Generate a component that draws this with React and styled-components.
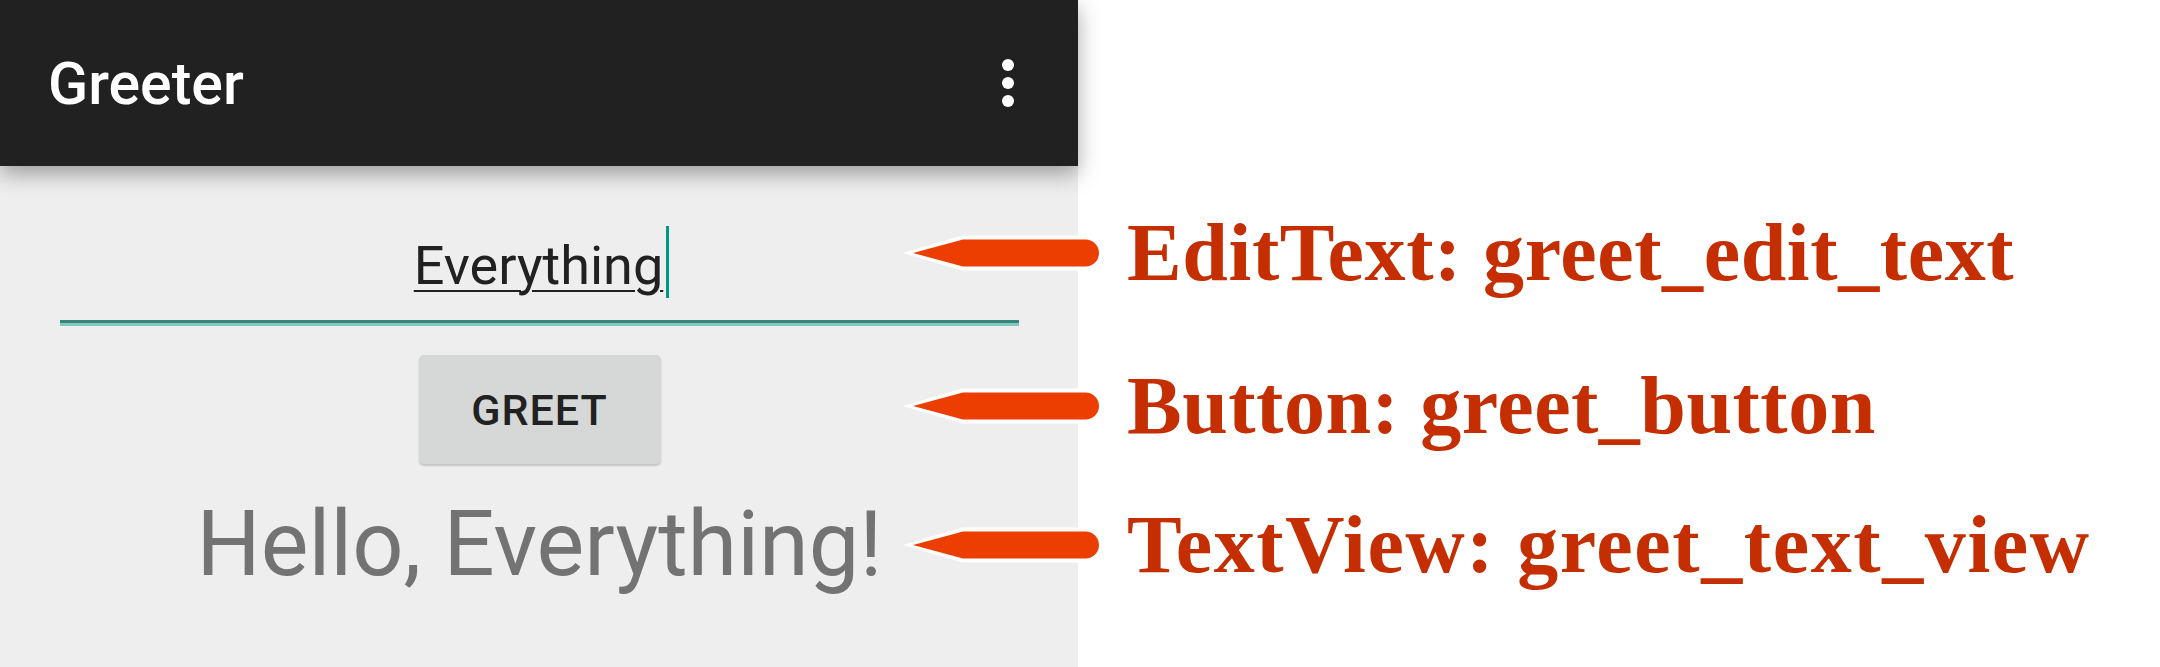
import React from "react";
import styled, { createGlobalStyle } from "styled-components";

const GlobalStyle = createGlobalStyle`
  html, body {
    margin: 0;
    padding: 0;
    background: #ffffff;
  }
  body {
    font-family: Roboto, "Noto Sans", sans-serif;
  }
`;

const Page = styled.div`
  display: flex;
  width: 2160px;
  height: 667px;
  overflow: hidden;
  background: #ffffff;
`;

const Phone = styled.div`
  width: 1078px;
  flex: none;
  height: 667px;
  background: #eeeeee;
  display: flex;
  flex-direction: column;
`;

const AppBar = styled.div`
  height: 166px;
  flex: none;
  background: #212121;
  display: flex;
  align-items: center;
  justify-content: space-between;
  padding: 0 64px 0 48px;
  box-shadow: 0 8px 20px rgba(0, 0, 0, 0.34);
  position: relative;
  z-index: 1;
`;

const Title = styled.div`
  color: #ffffff;
  font-family: Roboto, sans-serif;
  font-weight: 500;
  font-size: 59px;
  line-height: 1;
`;

const Kebab = styled.div`
  display: flex;
  flex-direction: column;
  gap: 6px;
  span {
    width: 12px;
    height: 12px;
    border-radius: 50%;
    background: #ffffff;
  }
`;

const Content = styled.div`
  display: flex;
  flex-direction: column;
  align-items: center;
  padding: 60px 59px 0 60px;
`;

const TextRow = styled.div`
  display: flex;
  align-items: center;
  justify-content: center;
  height: 72px;
  padding-left: 4px;
`;

const Typed = styled.span`
  font-family: Roboto, sans-serif;
  font-size: 54px;
  line-height: 1;
  color: #212121;
  padding-top: 7px;
  text-decoration: underline;
  text-decoration-thickness: 2px;
  text-underline-offset: 6px;
`;

const Cursor = styled.div`
  width: 3px;
  height: 72px;
  margin-left: 3px;
  background: #009688;
`;

const FieldLine = styled.div`
  width: 100%;
  height: 3px;
  margin-top: 22px;
  background: #37857a;
  border-bottom: 3px solid #80c8bd;
`;

const GreetButton = styled.button`
  margin-top: 29px;
  width: 242px;
  height: 109px;
  border: none;
  border-radius: 5px;
  background: #d6d7d7;
  box-shadow: 0 2px 2px rgba(0, 0, 0, 0.18);
  color: #212121;
  font-family: Roboto, sans-serif;
  font-weight: 500;
  font-size: 43px;
  letter-spacing: 1px;
  padding: 0;
`;

const Greeting = styled.div`
  margin-top: 36px;
  font-family: Roboto, sans-serif;
  font-size: 90px;
  line-height: 1;
  color: #737373;
`;

const Notes = styled.div`
  display: flex;
  flex-direction: column;
  margin-left: -178px;
`;

const Note = styled.div`
  display: flex;
  align-items: center;
  gap: 25px;
  height: 60px;
  margin-top: ${(p) => p.$mt}px;
`;

const Label = styled.div`
  font-family: "Liberation Serif", "DejaVu Serif", serif;
  font-weight: 700;
  font-size: 82px;
  line-height: 1;
  letter-spacing: ${(p) => p.$track}px;
  color: #c42e00;
  white-space: nowrap;
`;

const Pointer = () => (
  <svg width="202" height="36" viewBox="0 0 202 36" style={{ flex: "none" }}>
    <path d="M3 18 L62 0.5 H185.5 A17.5 17.5 0 0 1 185.5 35.5 H62 Z" fill="#ffffff" />
    <path d="M13 18 L63 4.5 H185.5 A13.5 13.5 0 0 1 185.5 31.5 H63 Z" fill="#eb3e00" />
  </svg>
);

const notes = [
  { mt: 223, track: 0.6, text: "EditText: greet_edit_text" },
  { mt: 93, track: 0.5, text: "Button: greet_button" },
  { mt: 79, track: 1.6, text: "TextView: greet_text_view" },
];

export default function App() {
  return (
    <Page>
      <GlobalStyle />
      <Phone>
        <AppBar>
          <Title>Greeter</Title>
          <Kebab>
            <span />
            <span />
            <span />
          </Kebab>
        </AppBar>
        <Content>
          <TextRow>
            <Typed>Everything</Typed>
            <Cursor />
          </TextRow>
          <FieldLine />
          <GreetButton>GREET</GreetButton>
          <Greeting>Hello, Everything!</Greeting>
        </Content>
      </Phone>
      <Notes>
        {notes.map((n) => (
          <Note key={n.text} $mt={n.mt}>
            <Pointer />
            <Label $track={n.track}>{n.text}</Label>
          </Note>
        ))}
      </Notes>
    </Page>
  );
}
